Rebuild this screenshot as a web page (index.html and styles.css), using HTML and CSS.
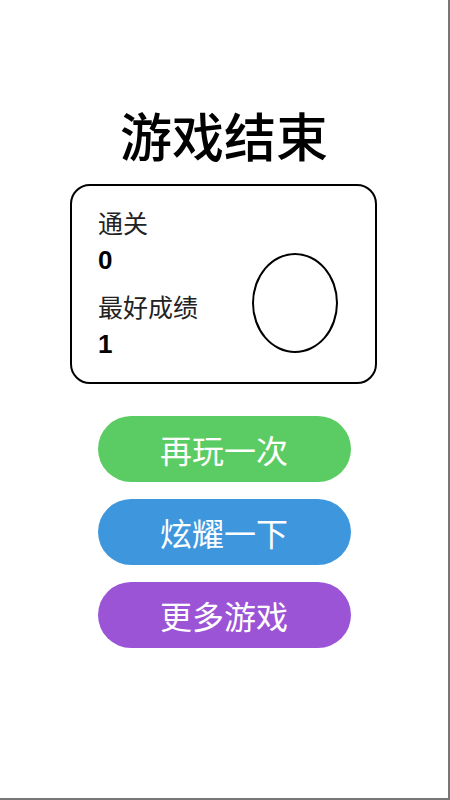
FILE: index.html
```html
<!DOCTYPE html>
<html lang="zh-CN">
<head>
  <meta charset="UTF-8">
  <meta name="viewport" content="width=device-width, initial-scale=1.0">
  <title>游戏结束</title>
  <link rel="stylesheet" href="styles.css">
</head>
<body>
  <div class="screen">
    <h1 class="title">游戏结束</h1>
    <div class="scoreCard">
      <div class="stats">
        <div class="label">通关</div>
        <div class="value">0</div>
        <div class="label best">最好成绩</div>
        <div class="value">1</div>
      </div>
      <div class="medal"></div>
    </div>
    <div class="actions">
      <button class="btn replay">再玩一次</button>
      <button class="btn share">炫耀一下</button>
      <button class="btn more">更多游戏</button>
    </div>
  </div>
</body>
</html>
```

FILE: styles.css
```css
body {
  margin: 0;
  background: #fff;
  font-family: "Liberation Sans", "Noto Sans CJK SC", sans-serif;
}

.screen {
  box-sizing: border-box;
  width: 450px;
  height: 800px;
  border-right: 2px solid #777;
  border-bottom: 2px solid #777;
  display: flex;
  flex-direction: column;
  align-items: center;
}

.title {
  margin: 104px 0 0;
  font-size: 52px;
  line-height: 61px;
  font-weight: 500;
  color: #000;
  font-family: "Noto Sans CJK SC", sans-serif;
}

.scoreCard {
  box-sizing: border-box;
  width: 307px;
  height: 200px;
  margin-top: 19px;
  margin-left: -1px;
  border: 2px solid #000;
  border-radius: 20px;
  display: flex;
  justify-content: space-between;
  align-items: flex-start;
  padding: 20px 37px 0 26px;
}

.label {
  font-size: 25px;
  line-height: 36px;
  color: #222;
}
.label.best {
  margin-top: 12px;
}
.value {
  font-size: 26px;
  line-height: 36px;
  font-weight: bold;
  color: #000;
}

.medal {
  box-sizing: border-box;
  width: 86px;
  height: 100px;
  margin-top: 47px;
  border: 2px solid #000;
  border-radius: 50%;
}

.actions {
  display: flex;
  flex-direction: column;
  gap: 17px;
  margin-top: 32px;
}

.btn {
  width: 253px;
  height: 66px;
  border: none;
  border-radius: 33px;
  color: #fff;
  font-size: 32px;
  font-family: "Noto Sans CJK SC", sans-serif;
  padding: 0;
  cursor: pointer;
}
.replay {
  background-color: #5bcc63;
}
.share {
  background-color: #3e97dd;
}
.more {
  background-color: #9b54d6;
}
```
